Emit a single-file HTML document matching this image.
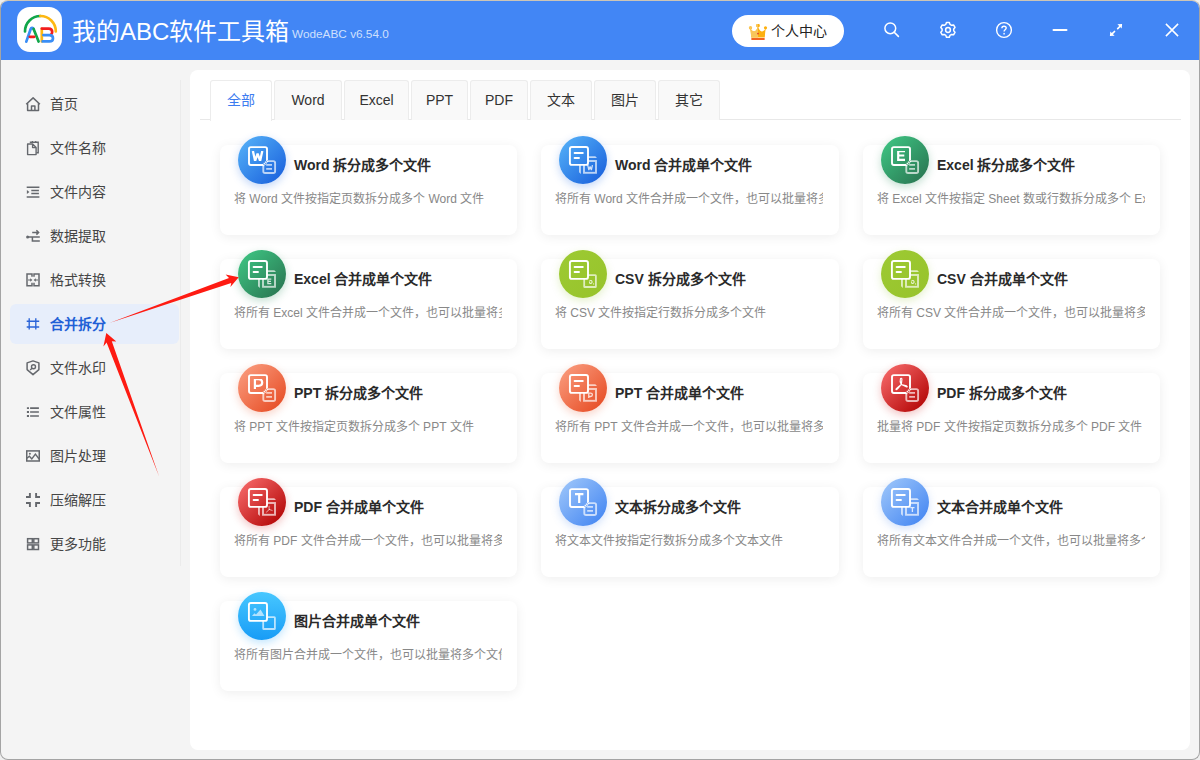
<!DOCTYPE html>
<html lang="zh-CN"><head><meta charset="utf-8">
<style>
*{margin:0;padding:0;box-sizing:border-box}
html,body{width:1200px;height:760px;overflow:hidden;background:#efefef;font-family:"Liberation Sans",sans-serif}
#win{position:absolute;left:0;top:0;width:1200px;height:760px;border:1px solid #a4a4a4;border-top-color:#cdc5b6;border-radius:8px;overflow:hidden;background:#f4f4f4}
#title{position:absolute;left:0;top:0;width:1198px;height:59px;background:#4286f5}
#logo{position:absolute;left:16px;top:6px;width:45px;height:45px;background:#fff;border-radius:13px}
#apptitle{position:absolute;left:71px;top:15px;font-size:24px;color:#fff;line-height:32px;white-space:nowrap}
#ver{position:absolute;left:291px;top:25px;font-size:11.8px;color:#cfe0fd;line-height:16px}
#user{position:absolute;left:731px;top:14px;width:112px;height:32px;background:#fff;border-radius:16px}
#user span{position:absolute;left:39px;top:7px;font-size:14px;line-height:18px;color:#222}
#side .it{position:absolute;left:9px;width:169px;height:40px;border-radius:6px}
#side .it svg{position:absolute;left:15px;top:11px}
#side .it span{position:absolute;left:40px;top:11px;font-size:14px;line-height:18px;color:#454545}
#side .it.on{background:#e7eefb}
#side .it.on span{color:#2160d6;font-weight:bold}
#sep{position:absolute;left:179px;top:79px;width:1px;height:486px;background:#ebebeb}
#panel{position:absolute;left:189px;top:69px;width:1000px;height:680px;background:#fff;border-radius:8px}
#tabline{position:absolute;left:199px;top:118px;width:981px;height:1px;background:#e8e8e8}
.tab{position:absolute;top:79px;height:40px;background:#f9f9f9;border:1px solid #ececec;border-bottom:none;border-radius:3px 3px 0 0;font-size:14px;line-height:38px;text-align:center;color:#333}
.tab.on{background:#fff;color:#3d7cf0;height:41px}
.card{position:absolute;width:297px;height:90px;background:#fff;border-radius:8px;box-shadow:0 2px 12px rgba(0,0,0,0.07)}
.card .ic{position:absolute;left:18px;top:-9px;width:48px;height:48px;border-radius:50%}
.card .ic svg{display:block}
.card .t{position:absolute;left:74px;top:11px;font-size:14px;line-height:18px;font-weight:bold;color:#2a2a2a;white-space:nowrap}
.card .d{position:absolute;left:14px;top:46px;width:268px;font-size:12px;line-height:16px;color:#888;white-space:nowrap;overflow:hidden}

</style></head><body>
<div id="win">
  <div id="title">
    <div id="logo"><svg width="46" height="46" viewBox="0 0 46 46" style="position:absolute;left:0;top:0">
<g fill="none" stroke-width="2.7" stroke-linecap="round">
<path d="M8 24.4 A15.4 15.4 0 0 1 23.4 9" stroke="#11a64a"/>
<path d="M23.4 9 A15.4 15.4 0 0 1 38.8 24.4" stroke="#fdb813"/>
<path d="M9.3 34.6 L13.6 22.2 C14.2 20.5 15.9 20.4 16.6 22" stroke="#3a8ef6"/>
<path d="M16.6 22 L21.6 34.6" stroke="#11a64a"/>
<path d="M12.8 29.8H17.2" stroke="#f21d1d"/>
<path d="M24.8 21.8V34.4" stroke="#fdb813"/>
<path d="M24.8 21.6H31.6C34.2 21.6 35.2 23.4 35.2 25 C35.2 26.2 34.6 27.4 33.6 27.9" stroke="#f21d1d"/>
<path d="M26.4 28.1H32.4C34.6 28.1 36 29.4 36 31.2 C36 33.2 34.6 34.4 32.4 34.4H25.6" stroke="#3a8ef6"/>
</g></svg></div>
    <div id="apptitle">我的ABC软件工具箱</div>
    <div id="ver">WodeABC v6.54.0</div>
    <div id="user"><svg width="20" height="18" viewBox="0 0 20 18" style="position:absolute;left:16px;top:8px">
<defs><clipPath id="crl"><rect x="0" y="0" width="10" height="18"/></clipPath></defs>
<g id="crb"><path d="M2.2 5.6 C2.7 8 3 11 3.2 14.6 H16.8 C17 11 17.3 8 17.8 5.6 C16.6 7 15.5 8.5 13.8 8.5 C12.1 8.5 11 6.4 10 3.6 C9 6.4 7.9 8.5 6.2 8.5 C4.5 8.5 3.4 7 2.2 5.6 Z" fill="#fdb00f"/>
<circle cx="2.5" cy="4.8" r="1.6" fill="#fdb00f"/><rect x="8.2" y="1.1" width="3.6" height="3.1" rx="1.1" fill="#fdb00f"/><circle cx="17.5" cy="4.8" r="1.6" fill="#fdb00f"/></g>
<g clip-path="url(#crl)"><path d="M2.2 5.6 C2.7 8 3 11 3.2 14.6 H16.8 C17 11 17.3 8 17.8 5.6 C16.6 7 15.5 8.5 13.8 8.5 C12.1 8.5 11 6.4 10 3.6 C9 6.4 7.9 8.5 6.2 8.5 C4.5 8.5 3.4 7 2.2 5.6 Z" fill="#f8c65a"/>
<circle cx="2.5" cy="4.8" r="1.6" fill="#f8c65a"/><rect x="8.2" y="1.1" width="3.6" height="3.1" rx="1.1" fill="#f8c65a"/></g>
<rect x="3.2" y="14.9" width="13.6" height="2.1" rx="0.8" fill="#f26522"/>
<circle cx="10" cy="10.6" r="0.9" fill="#e0392a"/>
</svg><span>个人中心</span></div>
    <svg width="1200" height="60" viewBox="1 1 1200 60" style="position:absolute;left:0;top:0" fill="none" stroke="#fff">
<circle cx="890.3" cy="28.3" r="5.4" stroke-width="1.5"/><path d="M894.2 32.2 L898.4 36.4" stroke-width="1.6" stroke-linecap="round"/>
<path d="M946.47 22.54 L949.33 22.54 L949.97 24.37 L951.65 25.35 L953.56 24.98 L954.99 27.46 L953.72 28.93 L953.72 30.87 L954.99 32.34 L953.56 34.82 L951.65 34.45 L949.97 35.43 L949.33 37.26 L946.47 37.26 L945.83 35.43 L944.15 34.45 L942.24 34.82 L940.81 32.34 L942.08 30.87 L942.08 28.93 L940.81 27.46 L942.24 24.98 L944.15 25.35 L945.83 24.37Z" stroke-width="1.5" stroke-linejoin="round"/><circle cx="948" cy="30" r="2.4" stroke-width="1.5"/>
<circle cx="1004" cy="30" r="7.4" stroke-width="1.4"/>
<path d="M1001.9 28.3 C1001.9 26.8 1002.8 26.2 1004 26.2 C1005.3 26.2 1006.2 27 1006.2 28.1 C1006.2 29.6 1004.1 29.9 1004.1 31.4" stroke-width="1.4"/>
<rect x="1003.3" y="32.9" width="1.6" height="1.6" fill="#fff" fill-opacity="0.9" stroke="none"/>
<path d="M1053.5 30 H1066.5" stroke-width="2" stroke-linecap="round"/>
<path d="M1117.7 28.7 L1120.4 26 M1114.5 31.5 L1111.8 34.2" stroke-width="1.7" stroke-linecap="round"/><path d="M1122.1 23.9 L1117.4 24.3 L1121.7 28.6Z M1109.9 36.1 L1110.3 31.4 L1114.6 35.7Z" fill="#fff" stroke="none"/>
<path d="M1165.9 23.9 L1178.1 36.1 M1178.1 23.9 L1165.9 36.1" stroke-width="1.5"/>
</svg>
  </div>
  <div id="side">
<div class="it" style="top:83px"><svg width="16" height="18" viewBox="0 0 16 18"><path d="M1.2 9.3 L8.1 2.9 L14.9 9.3 M2.6 8.2V15.6H13.5V8.2 M6.5 15.6V11H9.9V15.6" fill="none" stroke="#65686d" stroke-width="1.5" stroke-linejoin="round"/></svg><span>首页</span></div>
<div class="it" style="top:127px"><svg width="16" height="18" viewBox="0 0 16 18"><path d="M4.8 3.3H13.2V13.7H11.4" fill="none" stroke="#65686d" stroke-width="1.4"/><path d="M2.6 5H7.6L11.1 8.6V15.6H2.6Z M7.6 5V8.6H11.1" fill="none" stroke="#65686d" stroke-width="1.4" stroke-linejoin="round"/><path d="M7.4 2V3.4M10.7 2V3.4" stroke="#65686d" stroke-width="1.2"/></svg><span>文件名称</span></div>
<div class="it" style="top:171px"><svg width="16" height="18" viewBox="0 0 16 18"><path d="M1.7 4.2H14.4M6.3 7.4H13.9M6.3 10.4H13.9M1.7 13.9H14.4" stroke="#65686d" stroke-width="1.5"/><path d="M1.9 6.9L4.4 8.9 1.9 10.9Z" fill="#65686d"/></svg><span>文件内容</span></div>
<div class="it" style="top:215px"><svg width="16" height="18" viewBox="0 0 16 18"><path d="M7.2 5.4H13.4M11.4 3.2L13.6 5.4 11.4 7.6" fill="none" stroke="#65686d" stroke-width="1.5"/><path d="M2.4 10H14.8M7.4 10V14H14.8" fill="none" stroke="#65686d" stroke-width="1.5"/><circle cx="2.6" cy="10" r="1.5" fill="#65686d"/></svg><span>数据提取</span></div>
<div class="it" style="top:259px"><svg width="16" height="18" viewBox="0 0 16 18"><path d="M7 5.8V3H2V14.8H7V11.8 M9 5.8V3H14V14.8H9V11.8" fill="none" stroke="#65686d" stroke-width="1.5"/><path d="M3 9H6M13 9H10" stroke="#65686d" stroke-width="1"/><path d="M7.4 9L5.2 7.2V10.8Z M8.6 9L10.8 7.2V10.8Z" fill="#65686d"/></svg><span>格式转换</span></div>
<div class="it on" style="top:303px"><svg width="16" height="18" viewBox="0 0 16 18"><path d="M4.2 3.3V14.5M10.8 3.3V14.5M1.7 6.2H14.2M1.7 12H14.2" stroke="#2a63d8" stroke-width="1.35"/></svg><span>合并拆分</span></div>
<div class="it" style="top:347px"><svg width="16" height="18" viewBox="0 0 16 18"><path d="M8 1.9L13.9 3.9V10.6L8 15.6 2.1 10.6V3.9Z" fill="none" stroke="#65686d" stroke-width="1.5" stroke-linejoin="round"/><circle cx="8.5" cy="7.7" r="2" fill="none" stroke="#65686d" stroke-width="1.4"/><path d="M7.1 9.2L5.2 11" stroke="#65686d" stroke-width="1.4"/></svg><span>文件水印</span></div>
<div class="it" style="top:391px"><svg width="16" height="18" viewBox="0 0 16 18"><path d="M1.9 5.1H4M1.9 9H4M1.9 13H4" stroke="#65686d" stroke-width="1.9"/><path d="M5.1 5.1H13.9M5.1 9H13.9M5.1 13H13.9" stroke="#65686d" stroke-width="1.7"/></svg><span>文件属性</span></div>
<div class="it" style="top:435px"><svg width="16" height="18" viewBox="0 0 16 18"><rect x="1.75" y="3.9" width="12.5" height="10.1" fill="none" stroke="#65686d" stroke-width="1.5"/><path d="M1.9 11.3L4.4 9.2 6.8 12 10.4 7.1 14.1 12" fill="none" stroke="#65686d" stroke-width="1.4"/><circle cx="4.9" cy="6.8" r="1" fill="#65686d"/></svg><span>图片处理</span></div>
<div class="it" style="top:479px"><svg width="16" height="18" viewBox="0 0 16 18"><path d="M4.9 2V6H1M11.1 2V6H15M4.9 16V12H1M11.1 16V12H15" fill="none" stroke="#65686d" stroke-width="1.9"/></svg><span>压缩解压</span></div>
<div class="it" style="top:523px"><svg width="16" height="18" viewBox="0 0 16 18"><rect x="2.6" y="3.7" width="4.7" height="4.2" fill="none" stroke="#65686d" stroke-width="1.5"/><rect x="8.8" y="3.7" width="4.7" height="4.2" fill="none" stroke="#65686d" stroke-width="1.5"/><rect x="2.6" y="9.9" width="4.7" height="4.6" fill="none" stroke="#65686d" stroke-width="1.5"/><rect x="8.8" y="9.9" width="4.7" height="4.6" fill="none" stroke="#65686d" stroke-width="1.5"/></svg><span>更多功能</span></div>
  </div>
  <div id="sep"></div>
  <div id="panel"></div>
  <div id="tabline"></div>
  <div class="tab on" style="left:209px;width:62px">全部</div>
  <div class="tab" style="left:273px;width:68px">Word</div>
  <div class="tab" style="left:343px;width:65px">Excel</div>
  <div class="tab" style="left:410px;width:57px">PPT</div>
  <div class="tab" style="left:469px;width:58px">PDF</div>
  <div class="tab" style="left:529px;width:62px">文本</div>
  <div class="tab" style="left:593px;width:62px">图片</div>
  <div class="tab" style="left:657px;width:62px">其它</div>
<div class="card" style="left:219px;top:144px;width:297px"><div class="ic" style="box-shadow:0 3px 9px rgba(40,110,230,0.28)"><svg width="48" height="48" viewBox="0 0 48 48"><defs><linearGradient id="g0" gradientUnits="userSpaceOnUse" x1="7" y1="7" x2="41" y2="41"><stop offset="0" stop-color="#4ea8f5"/><stop offset="1" stop-color="#1f68df"/></linearGradient><clipPath id="lc"><rect x="10" y="15" width="20" height="9.9"/></clipPath></defs><circle cx="24" cy="24" r="24" fill="url(#g0)"/><rect x="25.3" y="25.1" width="11.8" height="11.9" rx="1.8" fill="none" stroke="#fff" stroke-opacity="0.68" stroke-width="1.9"/><path d="M10 10H30V25L25 30H10Z" fill="url(#g0)"/><path d="M29 24.4V13 Q29 11.1 27.1 11.1 H12.9 Q11 11.1 11 13 V27.1 Q11 29 12.9 29 H25.1" fill="none" stroke="#fff" stroke-width="1.9"/><path d="M28.2 28.9H34M28.2 32.9H34" stroke="#fff" stroke-opacity="0.68" stroke-width="1.7"/><path d="M24.9 29.5L29.9 24.5" stroke="#fff" stroke-opacity="1" stroke-width="2.6" stroke-dasharray="1.1 0.75"/><path d="M14.9 15 L17.1 24.9 L19.6 17.6 L22.1 24.9 L24.3 15" fill="none" stroke="#fff" stroke-width="2.3" stroke-linejoin="miter" stroke-miterlimit="3" clip-path="url(#lc)"/></svg></div><div class="t">Word 拆分成多个文件</div><div class="d">将 Word 文件按指定页数拆分成多个 Word 文件</div></div>
<div class="card" style="left:540px;top:144px;width:298px"><div class="ic" style="box-shadow:0 3px 9px rgba(40,110,230,0.28)"><svg width="48" height="48" viewBox="0 0 48 48"><defs><linearGradient id="g1" gradientUnits="userSpaceOnUse" x1="7" y1="7" x2="41" y2="41"><stop offset="0" stop-color="#4ea8f5"/><stop offset="1" stop-color="#1f68df"/></linearGradient></defs><circle cx="24" cy="24" r="24" fill="url(#g1)"/><path d="M29 20.3H36.3L38 22H29Z M20 29H21.9V38L20 36.3Z" fill="#fff" fill-opacity="0.68"/><rect x="25" y="25" width="12" height="11.8" fill="none" stroke="#fff" stroke-opacity="0.68" stroke-width="1.9"/><rect x="10.9" y="11" width="18.1" height="17.9" rx="2" fill="url(#g1)" stroke="#fff" stroke-width="1.9"/><path d="M15.6 17H23.8M15.6 22H20" stroke="#fff" stroke-width="1.9" stroke-linecap="round"/><g transform="translate(28.6 29.1) scale(0.5) translate(-14.6 -15)"><path d="M14.9 15 L17.1 24.9 L19.6 17.6 L22.1 24.9 L24.3 15" fill="none" stroke="#fff" stroke-opacity="0.78" stroke-width="2.6" stroke-linejoin="miter" stroke-miterlimit="3"/></g></svg></div><div class="t">Word 合并成单个文件</div><div class="d">将所有 Word 文件合并成一个文件，也可以批量将多个文件</div></div>
<div class="card" style="left:862px;top:144px;width:297px"><div class="ic" style="box-shadow:0 3px 9px rgba(40,140,90,0.28)"><svg width="48" height="48" viewBox="0 0 48 48"><defs><linearGradient id="g2" gradientUnits="userSpaceOnUse" x1="7" y1="7" x2="41" y2="41"><stop offset="0" stop-color="#3cbd7e"/><stop offset="1" stop-color="#2b7d56"/></linearGradient></defs><circle cx="24" cy="24" r="24" fill="url(#g2)"/><rect x="25.3" y="25.1" width="11.8" height="11.9" rx="1.8" fill="none" stroke="#fff" stroke-opacity="0.68" stroke-width="1.9"/><path d="M10 10H30V25L25 30H10Z" fill="url(#g2)"/><path d="M29 24.4V13 Q29 11.1 27.1 11.1 H12.9 Q11 11.1 11 13 V27.1 Q11 29 12.9 29 H25.1" fill="none" stroke="#fff" stroke-width="1.9"/><path d="M28.2 28.9H34M28.2 32.9H34" stroke="#fff" stroke-opacity="0.68" stroke-width="1.7"/><path d="M24.9 29.5L29.9 24.5" stroke="#fff" stroke-opacity="1" stroke-width="2.6" stroke-dasharray="1.1 0.75"/><path d="M24 15.2 H17.2 V23.9 H24 M17.2 19.5 H23.3" fill="none" stroke="#fff" stroke-width="2.2" stroke-linejoin="miter" stroke-miterlimit="3" clip-path="url(#lc)"/></svg></div><div class="t">Excel 拆分成多个文件</div><div class="d">将 Excel 文件按指定 Sheet 数或行数拆分成多个 Excel 文件</div></div>
<div class="card" style="left:219px;top:258px;width:297px"><div class="ic" style="box-shadow:0 3px 9px rgba(40,140,90,0.28)"><svg width="48" height="48" viewBox="0 0 48 48"><defs><linearGradient id="g3" gradientUnits="userSpaceOnUse" x1="7" y1="7" x2="41" y2="41"><stop offset="0" stop-color="#3cbd7e"/><stop offset="1" stop-color="#2b7d56"/></linearGradient></defs><circle cx="24" cy="24" r="24" fill="url(#g3)"/><path d="M29 20.3H36.3L38 22H29Z M20 29H21.9V38L20 36.3Z" fill="#fff" fill-opacity="0.68"/><rect x="25" y="25" width="12" height="11.8" fill="none" stroke="#fff" stroke-opacity="0.68" stroke-width="1.9"/><rect x="10.9" y="11" width="18.1" height="17.9" rx="2" fill="url(#g3)" stroke="#fff" stroke-width="1.9"/><path d="M15.6 17H23.8M15.6 22H20" stroke="#fff" stroke-width="1.9" stroke-linecap="round"/><g transform="translate(28.6 29.1) scale(0.5) translate(-14.6 -15)"><path d="M24 15.2 H17.2 V23.9 H24 M17.2 19.5 H23.3" fill="none" stroke="#fff" stroke-opacity="0.78" stroke-width="2.6" stroke-linejoin="miter" stroke-miterlimit="3"/></g></svg></div><div class="t">Excel 合并成单个文件</div><div class="d">将所有 Excel 文件合并成一个文件，也可以批量将多个文件</div></div>
<div class="card" style="left:540px;top:258px;width:298px"><div class="ic" style="box-shadow:0 3px 9px rgba(150,200,50,0.25)"><svg width="48" height="48" viewBox="0 0 48 48"><defs><linearGradient id="g4" gradientUnits="userSpaceOnUse" x1="7" y1="7" x2="41" y2="41"><stop offset="0" stop-color="#9cc932"/><stop offset="1" stop-color="#98c42c"/></linearGradient></defs><circle cx="24" cy="24" r="24" fill="url(#g4)"/><rect x="25.2" y="25.2" width="11.7" height="11.8" rx="0.6" fill="none" stroke="#fff" stroke-opacity="0.68" stroke-width="1.8"/><rect x="10.9" y="11" width="18.1" height="17.9" rx="2" fill="url(#g4)" stroke="#fff" stroke-width="1.9"/><path d="M15.6 17H23.8M15.6 22H20" stroke="#fff" stroke-width="1.9" stroke-linecap="round"/><path d="M30.6 31 C31.2 30.3 32.6 30.3 33 31.4 C33.4 32.6 32.5 33.5 31.6 33.5 C30.9 33.5 30.5 33 30.6 32.4" fill="none" stroke="#fff" stroke-opacity="0.78" stroke-width="1.1" stroke-linecap="round"/><circle cx="34.6" cy="33.9" r="0.65" fill="#fff" fill-opacity="0.78"/></svg></div><div class="t">CSV 拆分成多个文件</div><div class="d">将 CSV 文件按指定行数拆分成多个文件</div></div>
<div class="card" style="left:862px;top:258px;width:297px"><div class="ic" style="box-shadow:0 3px 9px rgba(150,200,50,0.25)"><svg width="48" height="48" viewBox="0 0 48 48"><defs><linearGradient id="g5" gradientUnits="userSpaceOnUse" x1="7" y1="7" x2="41" y2="41"><stop offset="0" stop-color="#9cc932"/><stop offset="1" stop-color="#98c42c"/></linearGradient></defs><circle cx="24" cy="24" r="24" fill="url(#g5)"/><path d="M29 20.3H36.3L38 22H29Z M20 29H21.9V38L20 36.3Z" fill="#fff" fill-opacity="0.68"/><rect x="25" y="25" width="12" height="11.8" fill="none" stroke="#fff" stroke-opacity="0.68" stroke-width="1.9"/><rect x="10.9" y="11" width="18.1" height="17.9" rx="2" fill="url(#g5)" stroke="#fff" stroke-width="1.9"/><path d="M15.6 17H23.8M15.6 22H20" stroke="#fff" stroke-width="1.9" stroke-linecap="round"/><path d="M30.6 31 C31.2 30.3 32.6 30.3 33 31.4 C33.4 32.6 32.5 33.5 31.6 33.5 C30.9 33.5 30.5 33 30.6 32.4" fill="none" stroke="#fff" stroke-opacity="0.78" stroke-width="1.1" stroke-linecap="round"/><circle cx="34.6" cy="33.9" r="0.65" fill="#fff" fill-opacity="0.78"/></svg></div><div class="t">CSV 合并成单个文件</div><div class="d">将所有 CSV 文件合并成一个文件，也可以批量将多个文件</div></div>
<div class="card" style="left:219px;top:372px;width:297px"><div class="ic" style="box-shadow:0 3px 9px rgba(235,100,60,0.28)"><svg width="48" height="48" viewBox="0 0 48 48"><defs><linearGradient id="g6" gradientUnits="userSpaceOnUse" x1="7" y1="7" x2="41" y2="41"><stop offset="0" stop-color="#f89475"/><stop offset="1" stop-color="#e8532c"/></linearGradient></defs><circle cx="24" cy="24" r="24" fill="url(#g6)"/><rect x="25.3" y="25.1" width="11.8" height="11.9" rx="1.8" fill="none" stroke="#fff" stroke-opacity="0.68" stroke-width="1.9"/><path d="M10 10H30V25L25 30H10Z" fill="url(#g6)"/><path d="M29 24.4V13 Q29 11.1 27.1 11.1 H12.9 Q11 11.1 11 13 V27.1 Q11 29 12.9 29 H25.1" fill="none" stroke="#fff" stroke-width="1.9"/><path d="M28.2 28.9H34M28.2 32.9H34" stroke="#fff" stroke-opacity="0.68" stroke-width="1.7"/><path d="M24.9 29.5L29.9 24.5" stroke="#fff" stroke-opacity="1" stroke-width="2.6" stroke-dasharray="1.1 0.75"/><path d="M16.9 24.9 V15.2 H20.6 C23 15.2 24.2 16.6 24.2 18.5 C24.2 20.4 23 21.8 20.6 21.8 H16.9" fill="none" stroke="#fff" stroke-width="2.2" stroke-linejoin="miter" stroke-miterlimit="3" clip-path="url(#lc)"/></svg></div><div class="t">PPT 拆分成多个文件</div><div class="d">将 PPT 文件按指定页数拆分成多个 PPT 文件</div></div>
<div class="card" style="left:540px;top:372px;width:298px"><div class="ic" style="box-shadow:0 3px 9px rgba(235,100,60,0.28)"><svg width="48" height="48" viewBox="0 0 48 48"><defs><linearGradient id="g7" gradientUnits="userSpaceOnUse" x1="7" y1="7" x2="41" y2="41"><stop offset="0" stop-color="#f89475"/><stop offset="1" stop-color="#e8532c"/></linearGradient></defs><circle cx="24" cy="24" r="24" fill="url(#g7)"/><path d="M29 20.3H36.3L38 22H29Z M20 29H21.9V38L20 36.3Z" fill="#fff" fill-opacity="0.68"/><rect x="25" y="25" width="12" height="11.8" fill="none" stroke="#fff" stroke-opacity="0.68" stroke-width="1.9"/><rect x="10.9" y="11" width="18.1" height="17.9" rx="2" fill="url(#g7)" stroke="#fff" stroke-width="1.9"/><path d="M15.6 17H23.8M15.6 22H20" stroke="#fff" stroke-width="1.9" stroke-linecap="round"/><g transform="translate(28.6 29.1) scale(0.5) translate(-14.6 -15)"><path d="M16.9 24.9 V15.2 H20.6 C23 15.2 24.2 16.6 24.2 18.5 C24.2 20.4 23 21.8 20.6 21.8 H16.9" fill="none" stroke="#fff" stroke-opacity="0.78" stroke-width="2.6" stroke-linejoin="miter" stroke-miterlimit="3"/></g></svg></div><div class="t">PPT 合并成单个文件</div><div class="d">将所有 PPT 文件合并成一个文件，也可以批量将多个文件</div></div>
<div class="card" style="left:862px;top:372px;width:297px"><div class="ic" style="box-shadow:0 3px 9px rgba(210,40,40,0.28)"><svg width="48" height="48" viewBox="0 0 48 48"><defs><linearGradient id="g8" gradientUnits="userSpaceOnUse" x1="7" y1="7" x2="41" y2="41"><stop offset="0" stop-color="#f06060"/><stop offset="1" stop-color="#b80d0d"/></linearGradient></defs><circle cx="24" cy="24" r="24" fill="url(#g8)"/><rect x="25.3" y="25.1" width="11.8" height="11.9" rx="1.8" fill="none" stroke="#fff" stroke-opacity="0.68" stroke-width="1.9"/><path d="M10 10H30V25L25 30H10Z" fill="url(#g8)"/><path d="M29 24.4V13 Q29 11.1 27.1 11.1 H12.9 Q11 11.1 11 13 V27.1 Q11 29 12.9 29 H25.1" fill="none" stroke="#fff" stroke-width="1.9"/><path d="M28.2 28.9H34M28.2 32.9H34" stroke="#fff" stroke-opacity="0.68" stroke-width="1.7"/><path d="M24.9 29.5L29.9 24.5" stroke="#fff" stroke-opacity="1" stroke-width="2.6" stroke-dasharray="1.1 0.75"/><path d="M20.3 20.5 C19.2 18.4 18.9 16.2 19.4 14.9 C19.8 13.9 21 14 20.9 15.2 C20.8 16.6 20.6 18.4 20.3 20.5 M20.3 20.5 L16.4 23.6 C15.4 24.4 14.6 25.4 15.2 25.7 C15.8 26 16.6 25 17.2 24.2 L20.3 20.5 M20.3 20.5 L24.6 21.6 C25.8 21.9 26.6 22.8 26 23 C25.4 23.2 24.6 22.6 24.2 22.2 L20.3 20.5" transform="" fill="none" stroke="#fff" stroke-opacity="1.0" stroke-width="1.15" stroke-linecap="round" stroke-linejoin="round"/></svg></div><div class="t">PDF 拆分成多个文件</div><div class="d">批量将 PDF 文件按指定页数拆分成多个 PDF 文件</div></div>
<div class="card" style="left:219px;top:486px;width:297px"><div class="ic" style="box-shadow:0 3px 9px rgba(210,40,40,0.28)"><svg width="48" height="48" viewBox="0 0 48 48"><defs><linearGradient id="g9" gradientUnits="userSpaceOnUse" x1="7" y1="7" x2="41" y2="41"><stop offset="0" stop-color="#f06060"/><stop offset="1" stop-color="#b80d0d"/></linearGradient></defs><circle cx="24" cy="24" r="24" fill="url(#g9)"/><path d="M29 20.3H36.3L38 22H29Z M20 29H21.9V38L20 36.3Z" fill="#fff" fill-opacity="0.68"/><rect x="25" y="25" width="12" height="11.8" fill="none" stroke="#fff" stroke-opacity="0.68" stroke-width="1.9"/><rect x="10.9" y="11" width="18.1" height="17.9" rx="2" fill="url(#g9)" stroke="#fff" stroke-width="1.9"/><path d="M15.6 17H23.8M15.6 22H20" stroke="#fff" stroke-width="1.9" stroke-linecap="round"/><path d="M20.3 20.5 C19.2 18.4 18.9 16.2 19.4 14.9 C19.8 13.9 21 14 20.9 15.2 C20.8 16.6 20.6 18.4 20.3 20.5 M20.3 20.5 L16.4 23.6 C15.4 24.4 14.6 25.4 15.2 25.7 C15.8 26 16.6 25 17.2 24.2 L20.3 20.5 M20.3 20.5 L24.6 21.6 C25.8 21.9 26.6 22.8 26 23 C25.4 23.2 24.6 22.6 24.2 22.2 L20.3 20.5" transform="translate(31.2 31.6) scale(0.55) translate(-20.2 -20.8)" fill="none" stroke="#fff" stroke-opacity="0.68" stroke-width="0.9" stroke-linecap="round" stroke-linejoin="round"/></svg></div><div class="t">PDF 合并成单个文件</div><div class="d">将所有 PDF 文件合并成一个文件，也可以批量将多个文件</div></div>
<div class="card" style="left:540px;top:486px;width:298px"><div class="ic" style="box-shadow:0 3px 9px rgba(80,140,240,0.25)"><svg width="48" height="48" viewBox="0 0 48 48"><defs><linearGradient id="g10" gradientUnits="userSpaceOnUse" x1="7" y1="7" x2="41" y2="41"><stop offset="0" stop-color="#94bff9"/><stop offset="1" stop-color="#4c8cf3"/></linearGradient></defs><circle cx="24" cy="24" r="24" fill="url(#g10)"/><rect x="25.3" y="25.1" width="11.8" height="11.9" rx="1.8" fill="none" stroke="#fff" stroke-opacity="0.68" stroke-width="1.9"/><path d="M10 10H30V25L25 30H10Z" fill="url(#g10)"/><path d="M29 24.4V13 Q29 11.1 27.1 11.1 H12.9 Q11 11.1 11 13 V27.1 Q11 29 12.9 29 H25.1" fill="none" stroke="#fff" stroke-width="1.9"/><path d="M28.2 28.9H34M28.2 32.9H34" stroke="#fff" stroke-opacity="0.68" stroke-width="1.7"/><path d="M24.9 29.5L29.9 24.5" stroke="#fff" stroke-opacity="1" stroke-width="2.6" stroke-dasharray="1.1 0.75"/><path d="M16 16.2 H24.4 M20.2 16.2 V24.9" fill="none" stroke="#fff" stroke-width="2.2" stroke-linejoin="miter" stroke-miterlimit="3" clip-path="url(#lc)"/></svg></div><div class="t">文本拆分成多个文件</div><div class="d">将文本文件按指定行数拆分成多个文本文件</div></div>
<div class="card" style="left:862px;top:486px;width:297px"><div class="ic" style="box-shadow:0 3px 9px rgba(80,140,240,0.25)"><svg width="48" height="48" viewBox="0 0 48 48"><defs><linearGradient id="g11" gradientUnits="userSpaceOnUse" x1="7" y1="7" x2="41" y2="41"><stop offset="0" stop-color="#94bff9"/><stop offset="1" stop-color="#4c8cf3"/></linearGradient></defs><circle cx="24" cy="24" r="24" fill="url(#g11)"/><path d="M29 20.3H36.3L38 22H29Z M20 29H21.9V38L20 36.3Z" fill="#fff" fill-opacity="0.68"/><rect x="25" y="25" width="12" height="11.8" fill="none" stroke="#fff" stroke-opacity="0.68" stroke-width="1.9"/><rect x="10.9" y="11" width="18.1" height="17.9" rx="2" fill="url(#g11)" stroke="#fff" stroke-width="1.9"/><path d="M15.6 17H23.8M15.6 22H20" stroke="#fff" stroke-width="1.9" stroke-linecap="round"/><g transform="translate(28.6 29.1) scale(0.5) translate(-14.6 -15)"><path d="M16 16.2 H24.4 M20.2 16.2 V24.9" fill="none" stroke="#fff" stroke-opacity="0.78" stroke-width="2.6" stroke-linejoin="miter" stroke-miterlimit="3"/></g></svg></div><div class="t">文本合并成单个文件</div><div class="d">将所有文本文件合并成一个文件，也可以批量将多个文件</div></div>
<div class="card" style="left:219px;top:600px;width:297px"><div class="ic" style="box-shadow:0 3px 9px rgba(30,160,250,0.28)"><svg width="48" height="48" viewBox="0 0 48 48"><defs><linearGradient id="g12" gradientUnits="userSpaceOnUse" x1="24" y1="0" x2="24" y2="48"><stop offset="0" stop-color="#47c7ff"/><stop offset="1" stop-color="#189cf6"/></linearGradient></defs><circle cx="24" cy="24" r="24" fill="url(#g12)"/><rect x="25.2" y="25.2" width="11.7" height="11.8" rx="0.6" fill="none" stroke="#fff" stroke-opacity="0.68" stroke-width="1.8"/><rect x="10.9" y="11" width="18.1" height="17.9" rx="2" fill="url(#g12)" stroke="#fff" stroke-width="1.9"/><circle cx="17" cy="17.4" r="1.4" fill="#fff" fill-opacity="0.62"/><path d="M14 23.9 L16.4 21.2 L18 22.4 L22.5 17.6 L26.5 23.9Z" fill="#fff" fill-opacity="0.62"/></svg></div><div class="t">图片合并成单个文件</div><div class="d">将所有图片合并成一个文件，也可以批量将多个文件</div></div>
<svg width="1200" height="760" viewBox="1 1 1200 760" style="position:absolute;left:0;top:0;pointer-events:none">
<path d="M109.4 323.1 L229 277.9 L225.6 274.4 L238.75 277.3 L230.4 286.9 L231.25 282.9 Z" fill="#fe1b12"/>
<path d="M159.2 476.8 L111.8 341.3 L116.3 341.6 L106.3 332.9 L103.4 346.6 L106.6 342.6 Z" fill="#fe1b12"/>
</svg>
</div>
</body></html>
